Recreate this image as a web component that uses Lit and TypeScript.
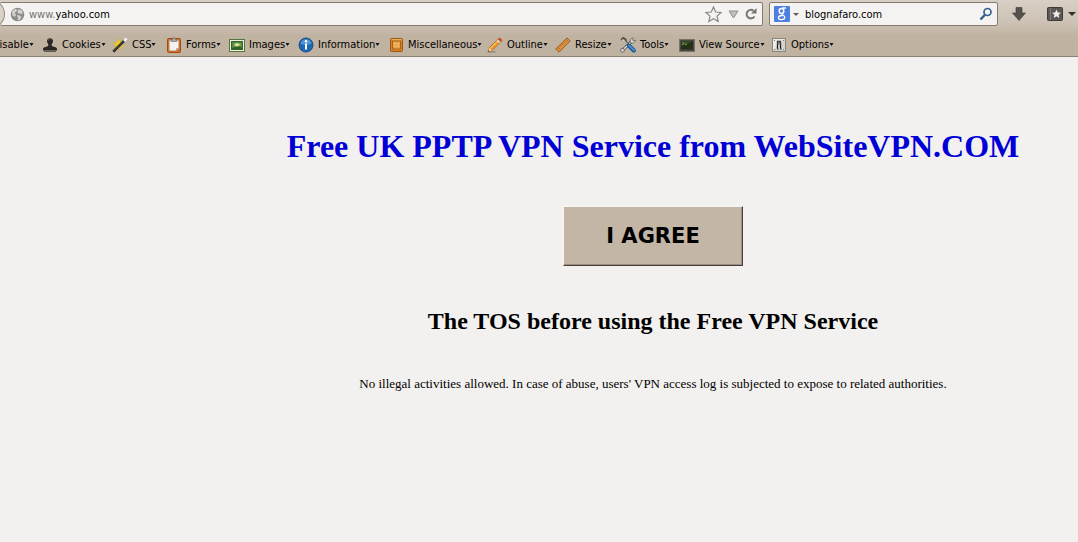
import { LitElement, html, svg, css } from "lit";
import { customElement } from "lit/decorators.js";

const icons: Record<string, unknown> = {
  cookies: svg`<path d="M8 1.200c2 0 3.200 1.400 3 3.200-.1 1.500-1.400 2-1.400 3.300 0 1.300.9 1.800 2.900 2.200 1.700.3 2.500.9 2.500 2.100v1.500H1V12c0-1.200.8-1.800 2.500-2.100 2-.4 2.900-.9 2.900-2.200 0-1.300-1.300-1.800-1.400-3.300C4.800 2.600 6 1.200 8 1.200z" fill="#2b2724"/><path d="M2 14.300h12" stroke="#5b534c" stroke-width="1.200"/><path d="M6.300 3.500c.3-.8.8-1.200 1.500-1.200" stroke="#77706a" fill="none"/>`,
  css: svg`<path d="M7 1.500l1.300 3 3.200-.6-1.700 2.900 2.600 2.400-3.500.4-.9 3.300-2.200-2.600-3.200 1.400 1.200-3.400L1 6.300l3.900-.6z" fill="#f0cf2c" stroke="#d9ac1c" stroke-width=".5"/><path d="M1.300 14.700L13.300 2.700" stroke="#222" stroke-width="2.600"/><path d="M1.700 14L12 3.700" stroke="#77736f" stroke-width=".7"/><path d="M12 4l2.600-2.600" stroke="#f7f5f1" stroke-width="2.600"/>`,
  forms: svg`<rect x="1.500" y="1.500" width="13" height="14" rx="1" fill="#cf6f2b" stroke="#a34a13"/><path d="M3.500 3.500h9v7.500l-2.500 2.500H3.500z" fill="#f4f3f2" stroke="#c9bdb3" stroke-width=".6"/><path d="M12.500 11L10 13.500V11z" fill="#b9b4af"/><path d="M5 4.500V2.500h1.500L7 .8h2l.5 1.700H11v2z" fill="#aaa6a1" stroke="#706b66" stroke-width=".6"/>`,
  images: svg`<rect x=".5" y="2.500" width="15" height="12" fill="#eef0e5" stroke="#55753a"/><rect x="2.500" y="4.500" width="11" height="8" fill="#568b3b" stroke="#35632a"/><path d="M3 11.500c2-2 3-1 4-2s3-1 4 0 1 1 2 2v.5H3z" fill="#316026"/><path d="M4.500 8l2-2h3l2.500 2-2.500 1.500h-3z" fill="#b9ca82"/><path d="M6.500 8L8 6.500 9.500 8 8 9z" fill="#e8e6ae"/>`,
  information: svg`<circle cx="8" cy="8" r="7" fill="#1f68b1" stroke="#174c89"/><path d="M2.500 6.500a5.700 5.700 0 0 1 11 0c-3 1.700-8 1.700-11 0z" fill="#5297d5"/><circle cx="8" cy="4.200" r="1.200" fill="#fff"/><path d="M8 6.500v6" stroke="#fff" stroke-width="2"/>`,
  misc: svg`<rect x="2.500" y="1.500" width="12" height="13" rx="1" fill="#d88424" stroke="#9c5512"/><rect x="4.500" y="4" width="8" height="8" fill="#e9a24a" stroke="#a9621a"/><path d="M5.500 6.500h6M5.500 9h6M3.500 2.700h10" stroke="#f3c07a" stroke-width=".9"/>`,
  outline: svg`<path d="M.8 14.900h8" stroke="#8e8378" stroke-width="1.200"/><path d="M1 14.800l1.200-4L12 1.200c.7-.7 3.500 1.800 2.800 2.700L5 13.500z" fill="#ef9d2a" stroke="#a65818" stroke-width=".7"/><path d="M3.300 11.300l8.500-8.500" stroke="#ffd477"/><path d="M1 14.800l1.200-4L5 13.500z" fill="#ecd1a8"/><path d="M1 14.800l.5-1.500 1.100 1z" fill="#222"/><path d="M12 1.200c.7-.7 3.500 1.800 2.800 2.700l-1.300 1.200-2.800-2.700z" fill="#d34a37"/><path d="M10.700 2.400l2.800 2.700-1.200 1.200-2.700-2.800z" fill="#d9d5d1"/>`,
  resize: svg`<path d="M.8 12L12 .9l3.200 3L4 15.200z" fill="#dc8f3d" stroke="#955417" stroke-width=".9"/><path d="M3.200 10.500l1.500 1.500M5.200 8.500l1 1M7.200 6.500l1.500 1.500M9.200 4.500l1 1M11.200 2.700l1.500 1.500" stroke="#98591d" stroke-width=".8"/>`,
  tools: svg`<path d="M2 13.800L12 4" stroke="#55514e" stroke-width="3"/><path d="M2.300 13.500L12 4" stroke="#dedbd8" stroke-width="1.400"/><path d="M10.300 5.500V2.700L12.300.8l1 .1-.9 2 1 1 2-.9.1 1-2 2h-2.800z" fill="#dcd9d6" stroke="#55514e" stroke-width=".7"/><circle cx="2.500" cy="13.300" r="1.900" fill="#dcd9d6" stroke="#55514e" stroke-width=".8"/><path d="M1.200 3l2-2 2.300 1.400.3 2.200L9 8" fill="none" stroke="#55514e" stroke-width="2"/><path d="M2 2.600l2.500 1.400L8 7.500" fill="none" stroke="#e1dedb"/><path d="M8.800 8.500l5 5" stroke="#174f8d" stroke-width="4" stroke-linecap="round"/><path d="M9 8.500l5 4.800" stroke="#4b8fcd" stroke-width="2" stroke-linecap="round"/>`,
  source: svg`<rect x=".5" y="2.500" width="15" height="12" fill="#4a4945" stroke="#77736b"/><rect x="2" y="4" width="12" height="8.500" fill="#253017"/><path d="M2.500 4.500h11L2.500 9z" fill="#41522c"/><path d="M3.500 5.500L5 6.500l-1.500 1M6 7.500h2" stroke="#86c052" stroke-width=".7" fill="none"/>`,
  options: svg`<rect x="1.500" y="1.500" width="13" height="13" fill="#d6d4d0" stroke="#89847d"/><path d="M2 2h12L2 13z" fill="#edebe8"/><path d="M6.500 11.500v-7h3v7" fill="#e9e7e4" stroke="#1d1a18" stroke-width="1.300"/><path d="M6.500 4.500h3v3h-3z" fill="#77736f"/><path d="M6 12h1.500M9 12h1.500" stroke="#1d1a18"/><path d="M3 3.500h1M12 3.500h1M3 12.500h1M12 12.500h1" stroke="#777"/>`,
};

const tools: [string, string][] = [
  ["cookies", "Cookies"],
  ["css", "CSS"],
  ["forms", "Forms"],
  ["images", "Images"],
  ["information", "Information"],
  ["misc", "Miscellaneous"],
  ["outline", "Outline"],
  ["resize", "Resize"],
  ["tools", "Tools"],
  ["source", "View Source"],
  ["options", "Options"],
];

@customElement("app-root")
export class AppRoot extends LitElement {
  static styles = css`
    :host {
      display: block;
      min-height: 100vh;
      background: #f3f1ef;
      color: #000;
      overflow-x: hidden;
    }
    * { box-sizing: border-box; }
    svg { display: block; flex: none; }
    button { appearance: none; border: 0; padding: 0; margin: 0; background: none; color: inherit; font: inherit; }
    .chrome {
      height: 57px;
      overflow: hidden;
      border-bottom: 1px solid #8c8073;
      background: linear-gradient(#d8d0c5 0, #cbc0b3 24px, #c1b3a2 36px, #c0b2a1 100%);
      font: 11px/14px "DejaVu Sans Condensed", "DejaVu Sans", sans-serif;
      font-stretch: condensed;
    }
    .nav { display: flex; align-items: center; padding: 2px 2px 0 0; }
    .field {
      display: flex;
      align-items: center;
      height: 24px;
      border: 1px solid #857a6e;
      border-radius: 2px;
      background: #f5f3f1;
    }
    .address { flex: 1; position: relative; padding: 0 4px 0 10px; border-left: 0; }
    .back {
      position: absolute;
      left: -27px;
      top: -4px;
      width: 32px;
      height: 30px;
      border: 1px solid #93887b;
      border-radius: 50%;
      background: #d9d2c9;
    }
    .url { flex: 1; padding: 2px 0 0 4px; color: #000; }
    .dim { color: #77716c; }
    .search { width: 229px; margin-left: 6px; padding: 0 4px; }
    .query { flex: 1; min-width: 0; border: 0; padding: 2px 0 0 5px; background: none; font: inherit; color: #000; outline: 0; }
    .actions { display: flex; align-items: center; padding-left: 13px; }
    .bookmarks { display: flex; align-items: center; gap: 5px; padding-left: 20px; }
    .tools {
      display: grid;
      grid-template-columns: 42px 70px 54px 63px 69px 90px 99px 68px 65px 59px 92px auto;
      justify-content: start;
      padding-top: 11px;
    }
    .tool { display: flex; align-items: center; height: 16px; white-space: nowrap; }
    .tool span { padding-left: 4px; }
    .clipped { margin-left: -8px; }
    .page {
      display: flex;
      flex-direction: column;
      align-items: center;
      padding: 70px 0 40px 228px;
      font-family: "Liberation Serif", "Times New Roman", serif;
      text-align: center;
    }
    h1, h2, p { margin: 0; }
    h1 { font-size: 32px; line-height: 38px; color: #0000d6; }
    .agree {
      width: 180px;
      height: 60px;
      margin-top: 41px;
      border: 1px solid;
      border-color: #f8f5f1 #4a403b #4a403b #f8f5f1;
      background: #c3b6a6;
      box-shadow: inset -1px -1px #9b8e80;
      font: bold 21px/24px "DejaVu Sans", Verdana, sans-serif;
    }
    h2 { margin-top: 41px; font-size: 24px; line-height: 28px; }
    p { margin-top: 41px; font-size: 13px; line-height: 16px; }
  `;

  render() {
    const arrow = html`<svg width="5" height="8" viewBox="0 0 5 8"><path d="M.5 2h4L2.500 5z" fill="#111" /></svg>`;
    return html`
      <header class="chrome">
        <div class="nav">
          <div class="field address">
            <button class="back" aria-label="Back"></button>
            <svg width="15" height="15" viewBox="0 0 15 15">
              <circle cx="7.500" cy="7.500" r="6.800" fill="#8d8a88" />
              <path d="M2 4.500l3-2.500 2 .5-.5 2-2 1.500 1.500 1.500-1 2.500-2.500-1.500zM8.500 2l3.500 1.500 1 3-2 .5-1.500-1-1 1-1-2zM7 8l3 .5 1.500 1.500-2 3-2 .3.500-2z" fill="#d5d2cf" />
            </svg>
            <span class="url"><span class="dim">www.</span>yahoo.com</span>
            <button aria-label="Bookmark this page">
              <svg width="17" height="17" viewBox="0 0 17 17"><path d="M8.500 1l2.200 5 5.300.5-4 3.600 1.200 5.400-4.700-2.800-4.700 2.800L5 10.100 1 6.500 6.300 6z" fill="#f5f3f1" stroke="#8b8784" stroke-width="1.200" /></svg>
            </button>
            <button aria-label="History">
              <svg width="22" height="16" viewBox="0 0 22 16"><path d="M7 5h9l-4.500 7z" fill="#c2beba" stroke="#918d89" /></svg>
            </button>
            <button aria-label="Reload">
              <svg width="14" height="16" viewBox="0 0 14 16"><path d="M10.500 10.500A4.300 4.300 0 1 1 9.500 4.700" fill="none" stroke="#77736f" stroke-width="2" /><path d="M12.500 2v5.500H7z" fill="#77736f" /></svg>
            </button>
          </div>
          <div class="field search">
            <svg width="16" height="16" viewBox="0 0 16 16">
              <rect width="16" height="16" rx="1" fill="#4b7fe0" />
              <ellipse cx="7.500" cy="5" rx="2.300" ry="2.500" fill="none" stroke="#fff" stroke-width="1.500" />
              <path d="M8 2h4M8.500 7.300c-2 1.500 2.300 2 2.300 4 0 1.500-1.400 2.400-3.300 2.400s-3.100-.8-3.100-2c0-1.500 1.600-2.100 4-2.200" fill="none" stroke="#fff" stroke-width="1.300" />
            </svg>
            <svg width="10" height="8" viewBox="0 0 10 8"><path d="M3 3h6L6 6z" fill="#655e58" /></svg>
            <input class="query" aria-label="Search" value="blognafaro.com" />
            <button aria-label="Search">
              <svg width="14" height="14" viewBox="0 0 14 14"><circle cx="8.500" cy="5" r="3.500" fill="none" stroke="#315f8f" stroke-width="1.700" /><path d="M6 7.700L1.500 12.500" stroke="#315f8f" stroke-width="2.400" /></svg>
            </button>
          </div>
          <div class="actions">
            <button aria-label="Downloads">
              <svg width="16" height="16" viewBox="0 0 16 16"><path d="M5 1.500h6V7h3.500L8 14.500 1.500 7H5z" fill="#55514e" stroke="#3d3936" stroke-width=".6" /></svg>
            </button>
            <button class="bookmarks" aria-label="Bookmarks">
              <svg width="16" height="14" viewBox="0 0 16 14"><rect x=".5" y=".5" width="15" height="13" rx="1" fill="#5b5754" stroke="#3f3b38" /><path d="M3.500 1v12" stroke="#827d79" /><path d="M9.500 2.500l1.300 2.900 3.200.3-2.400 2.100.7 3.200-2.800-1.700L6.700 11l.7-3.200L5 5.700l3.200-.3z" fill="#f1eeea" /></svg>
              <svg width="8" height="6" viewBox="0 0 8 6"><path d="M0 1h8L4 5z" fill="#332f2c" /></svg>
            </button>
          </div>
        </div>
        <nav class="tools">
          <button class="tool clipped">Disable${arrow}</button>
          ${tools.map(
            ([icon, label]) => html`<button class="tool">
              <svg width="16" height="16" viewBox="0 0 16 16">${icons[icon]}</svg><span>${label}</span>${arrow}
            </button>`
          )}
        </nav>
      </header>
      <main class="page">
        <h1>Free UK PPTP VPN Service from WebSiteVPN.COM</h1>
        <button class="agree">I AGREE</button>
        <h2>The TOS before using the Free VPN Service</h2>
        <p>No illegal activities allowed. In case of abuse, users' VPN access log is subjected to expose to related authorities.</p>
      </main>
    `;
  }
}
